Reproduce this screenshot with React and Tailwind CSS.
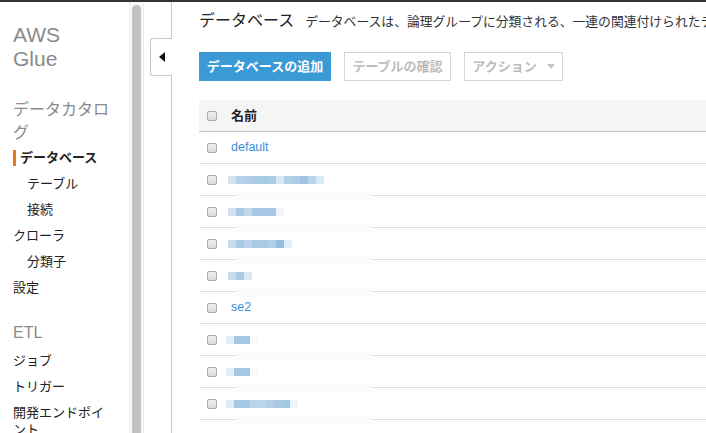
import React from "react";

const FONT = { fontFamily: '"Liberation Sans", "Noto Sans CJK JP", Arial, sans-serif' };

const rows = [
  { name: "default" },
  { blur: ["#d5e3ef", "#b5d2e8", "#b0cfe6", "#abc8e5", "#a6cce5", "#a9cfe6", "#d9e8f0", "#b2d0e6", "#aacfe3", "#9fc5e3", "#bad4ea", "#d9eaf5"], x: 228 },
  { blur: ["#d6e0f0", "#a9c9e6", "#c3d9ea", "#a8c8e4", "#a5c9e4", "#a5c9e4", "#f0f6fb"], x: 228 },
  { blur: ["#c5dcec", "#a6cbe4", "#b9d1e9", "#a9c9e3", "#a7cbe4", "#b1cfe6", "#93bddf", "#deedf6"], x: 228 },
  { blur: ["#c6dcee", "#a5cbe5", "#dbe8f3"], x: 228 },
  { name: "se2" },
  { blur: ["#e2edf5", "#a5c9e4", "#a4c8e3", "#f8fbfd"], x: 226 },
  { blur: ["#e2edf5", "#a5c9e4", "#a4c8e3", "#f8fbfd"], x: 226 },
  { blur: ["#e0ebf4", "#a5c9e4", "#a5c9e4", "#b9d3e7", "#bad4e8", "#b5d0e6", "#a7c9e4", "#a2c7e3", "#eef5fa"], x: 226 },
];

function Checkbox() {
  return (
    <span className="inline-block w-[10px] h-[10px] rounded-[2px] border border-[#a9a9a9] bg-gradient-to-b from-[#f0f0f0] to-[#dcdcdc] shrink-0" />
  );
}

function SideItem({ children, indent, active }) {
  return (
    <div className={`h-[26px] flex items-center text-[13px] text-[#222] ${indent ? "pl-[14px]" : ""}`}>
      {active ? (
        <span className="flex items-center">
          <span className="w-[3px] h-[16px] bg-[#e07b22] mr-[4px]" />
          <span className="font-bold">{children}</span>
        </span>
      ) : (
        children
      )}
    </div>
  );
}

export default function App() {
  return (
    <div className="w-[706px] h-[433px] overflow-hidden bg-white flex flex-col" style={FONT}>
      <div className="h-[2px] bg-[#2f353b] shrink-0" />
      <div className="flex flex-1 min-h-0">
        {/* Sidebar */}
        <div className="w-[129px] shrink-0 pl-[13px] pt-[21px] overflow-hidden">
          <div className="text-[21px] leading-[24px] text-[#8a8a8a]">
            AWS
            <br />
            Glue
          </div>
          <div className="mt-[27px] w-[106px] text-[16px] leading-[23px] text-[#8a8a8a]">データカタログ</div>
          <div className="mt-[1px]">
            <SideItem active>データベース</SideItem>
            <SideItem indent>テーブル</SideItem>
            <SideItem indent>接続</SideItem>
            <SideItem>クローラ</SideItem>
            <SideItem indent>分類子</SideItem>
            <SideItem>設定</SideItem>
          </div>
          <div className="mt-[20px] text-[16px] leading-[24px] text-[#8a8a8a]">ETL</div>
          <div className="mt-[3px]">
            <SideItem>ジョブ</SideItem>
            <SideItem>トリガー</SideItem>
            <div className="w-[96px] text-[13px] leading-[17px] text-[#222] pt-[4px]">開発エンドポイント</div>
          </div>
        </div>

        {/* Scrollbar */}
        <div className="w-[15px] shrink-0 border-l border-r border-[#ececec] bg-[#fafafa] flex justify-center pt-[3px]">
          <div className="w-[9px] h-full rounded-t-[5px] bg-[#c1c1c1]" />
        </div>

        {/* Gap with collapse tab */}
        <div className="w-[27px] shrink-0 relative">
          <div className="absolute left-[6px] top-[36px] w-[22px] h-[38px] bg-white border border-r-0 border-[#c8c8c8] rounded-l-[3px] flex items-center justify-center z-10">
            <span className="block w-0 h-0 border-t-[5px] border-b-[5px] border-r-[6px] border-t-transparent border-b-transparent border-r-[#111]" />
          </div>
        </div>

        {/* Main */}
        <div className="flex-1 min-w-0 border-l border-[#c8c8c8] pl-[27px] overflow-hidden">
          <div className="pt-[7px] flex items-baseline whitespace-nowrap">
            <span className="text-[16px] text-[#222]">データベース</span>
            <span className="ml-[11px] text-[12.8px] text-[#333]">データベースは、論理グループに分類される、一連の関連付けられたテーブル定義です。</span>
          </div>
          <div className="mt-[19px] flex gap-[13px]">
            <div className="h-[29px] w-[132px] bg-[#3a9ad6] text-white text-[13px] font-bold flex items-center justify-center">データベースの追加</div>
            <div className="h-[29px] w-[107px] border border-[#d5d5d5] text-[#bdbdbd] text-[13px] font-bold flex items-center justify-center">テーブルの確認</div>
            <div className="h-[29px] w-[99px] border border-[#d5d5d5] text-[#bdbdbd] text-[13px] font-bold flex items-center justify-center gap-[10px]">
              <span>アクション</span>
              <span className="block w-0 h-0 border-l-[4px] border-r-[4px] border-t-[5px] border-l-transparent border-r-transparent border-t-[#c4c4c4]" />
            </div>
          </div>
          <div className="mt-[19px] w-[600px]">
            <div className="h-[32px] bg-[#f5f5f5] border-b border-[#c4c4c4] flex items-center pl-[8px]">
              <Checkbox />
              <span className="ml-[14px] text-[13px] font-bold text-[#222]">名前</span>
            </div>
            {rows.map((r, i) => (
              <div key={i} className="h-[32px] border-b border-[#dedede] flex items-center pl-[8px] relative">
                <Checkbox />
                {r.name ? (
                  <span className="ml-[14px] text-[12.5px] text-[#3b8fd4]">{r.name}</span>
                ) : (
                  <div className="flex" style={{ marginLeft: r.x - 217 }}>
                    {r.blur.map((c, j) => (
                      <span key={j} className="block w-[8px] h-[8px]" style={{ background: c }} />
                    ))}
                  </div>
                )}
                {!r.name && (
                  <span className="absolute left-[37px] bottom-[-6px] w-[136px] h-[8px] bg-[#fafafa]" />
                )}
              </div>
            ))}
          </div>
        </div>
      </div>
    </div>
  );
}
